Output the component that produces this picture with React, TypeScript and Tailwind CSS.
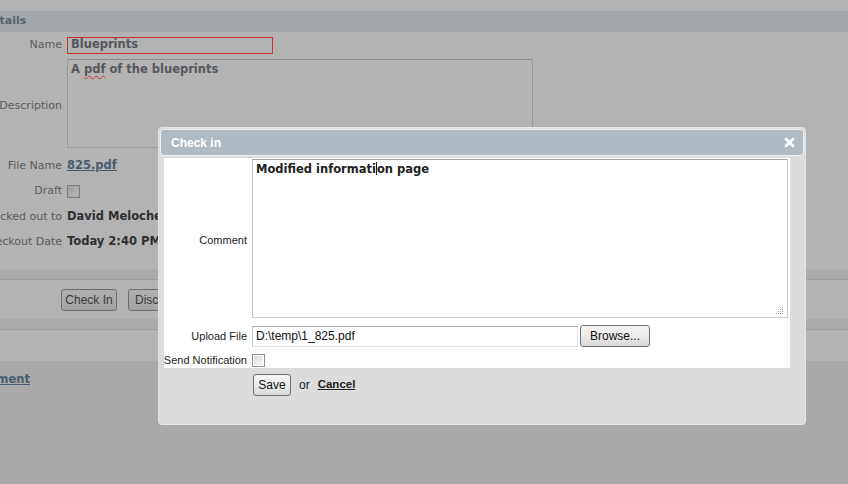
import React from 'react'

function BgLabel({ children }: { children: React.ReactNode }) {
  return (
    <div className="w-[62px] shrink-0 flex justify-end whitespace-nowrap text-[11px] text-[#5c5c5c]">
      {children}
    </div>
  )
}

function BgCheckbox() {
  return (
    <div className="w-[13px] h-[13px] border border-[#7d7d7d] bg-[#a9a9a9] p-[1px]">
      <div className="w-full h-full bg-gradient-to-br from-[#9e9e9e] to-[#b8b8b8]" />
    </div>
  )
}

function Checkbox() {
  return (
    <div className="w-[13px] h-[13px] border border-[#8e8f8f] bg-white p-[1px]">
      <div className="w-full h-full bg-gradient-to-br from-[#dcdcdc] to-[#f6f6f6]" />
    </div>
  )
}

function Background() {
  return (
    <div className="flex flex-col">
      <div className="h-[11px] bg-[#b3b3b3]" />
      <div className="h-[21px] bg-[#a4a8ab] flex items-center">
        <span className="-ml-[17px] text-[11px] font-bold text-[#56616b] whitespace-nowrap">Details</span>
      </div>

      <div className="h-[237px] bg-[#b3b3b3] flex flex-col">
        <div className="mt-[3px] h-[20px] flex items-center gap-[5px]">
          <BgLabel>Name</BgLabel>
          <div className="w-[206px] h-[17px] border border-[#c23535] flex items-center px-[3px] text-[11.5px] font-bold text-[#55555a]">
            Blueprints
          </div>
        </div>
        <div className="mt-[4px] h-[89px] flex items-center gap-[5px]">
          <div className="pt-[5px]">
            <BgLabel>Description</BgLabel>
          </div>
          <div className="w-[466px] h-[89px] border border-[#9a9a9a] border-t-[#8c8c8c] px-[3px] py-[1px] text-[11.5px] font-bold text-[#57575d]">
            A{' '}
            <span className="underline decoration-wavy decoration-[#c23535] decoration-1 underline-offset-2">pdf</span>{' '}
            of the blueprints
          </div>
        </div>
        <div className="mt-[8px] h-[20px] flex items-center gap-[5px]">
          <BgLabel>File Name</BgLabel>
          <span className="text-[11.5px] font-bold underline text-[#4a5c6e]">825.pdf</span>
        </div>
        <div className="mt-[5px] h-[20px] flex items-center gap-[5px]">
          <BgLabel>Draft</BgLabel>
          <BgCheckbox />
        </div>
        <div className="mt-[6px] h-[20px] flex items-center gap-[5px]">
          <BgLabel>Checked out to</BgLabel>
          <span className="text-[11.5px] font-bold text-[#2f2f33] whitespace-nowrap">David Meloche</span>
        </div>
        <div className="mt-[5px] h-[20px] flex items-center gap-[5px]">
          <BgLabel>Checkout Date</BgLabel>
          <span className="text-[11.5px] font-bold text-[#2f2f33] whitespace-nowrap">Today 2:40 PM</span>
        </div>
      </div>

      <div className="h-[11px] bg-[#ababab] border-b border-[#9c9c9c]" />
      <div className="h-[39px] bg-[#b3b3b3] pt-[9px] flex gap-[11px] pl-[61px] font-['Liberation_Sans',sans-serif]">
        <div className="w-[56px] h-[22px] rounded-[3px] border border-[#6f6f6f] bg-gradient-to-b from-[#b0b0b0] to-[#a3a3a3] flex items-center justify-center text-[12px] text-[#3a3a3a]">
          Check In
        </div>
        <div className="h-[22px] px-[6px] rounded-[3px] border border-[#6f6f6f] bg-gradient-to-b from-[#b0b0b0] to-[#a3a3a3] flex items-center text-[12px] text-[#3a3a3a]">
          Discard Check Out
        </div>
      </div>
      <div className="h-[11px] bg-[#ababab] border-b border-[#9c9c9c]" />
      <div className="h-[31px] bg-[#b3b3b3]" />
      <div className="h-[123px] bg-[#a9a9a9] pt-[10px]">
        <div className="w-[30px] flex justify-end whitespace-nowrap">
          <span className="text-[11.5px] font-bold underline text-[#4a5c6e]">Add Attachment</span>
        </div>
      </div>
    </div>
  )
}

function Dialog() {
  return (
    <div className="absolute left-[158px] top-[127px] w-[648px] h-[298px] rounded-[4px] bg-[#dcdcdc] border border-[#e4e4e4] p-[1px] font-['Liberation_Sans',sans-serif]">
      <div className="h-[27px] rounded-[4px] bg-[#b0bac3] border border-[#eef1f3] flex items-center justify-between pl-[10px] pr-[8px]">
        <span className="text-[12px] font-bold text-white">Check in</span>
        <svg width="11" height="11" viewBox="0 0 11 11">
          <path d="M2 2 L9 9 M9 2 L2 9" stroke="#ffffff" strokeWidth="2.6" strokeLinecap="round" />
        </svg>
      </div>

      <div className="mt-[2px] ml-[4px] w-[626px] h-[210px] bg-white pt-[1px] flex flex-col">
        <div className="flex gap-[5px]">
          <div className="w-[83px] pt-[3px] flex items-center justify-end text-[11px] text-[#222]">Comment</div>
          <div className="relative w-[536px] h-[159px] border border-[#c9ced3] border-t-[#a6a6a6] border-l-[#b9b9b9] px-[3px] pt-[1px] font-['DejaVu_Sans',sans-serif] text-[11.5px] font-bold text-[#222]">
            Modified informati
            <span className="inline-block w-[1px] h-[13px] bg-[#222] align-middle -mt-[2px]" />
            on page
            <svg className="absolute right-[3px] bottom-[2px]" width="10" height="9" viewBox="0 0 10 9">
              <rect x="8" y="1" width="1" height="1" fill="#9a9a9a" />
              <rect x="6" y="3" width="1" height="1" fill="#9a9a9a" />
              <rect x="8" y="3" width="1" height="1" fill="#9a9a9a" />
              <rect x="4" y="5" width="1" height="1" fill="#9a9a9a" />
              <rect x="6" y="5" width="1" height="1" fill="#9a9a9a" />
              <rect x="8" y="5" width="1" height="1" fill="#9a9a9a" />
              <rect x="2" y="7" width="1" height="1" fill="#9a9a9a" />
              <rect x="4" y="7" width="1" height="1" fill="#9a9a9a" />
              <rect x="6" y="7" width="1" height="1" fill="#9a9a9a" />
              <rect x="8" y="7" width="1" height="1" fill="#9a9a9a" />
            </svg>
          </div>
        </div>

        <div className="mt-[7px] h-[22px] flex items-center gap-[5px]">
          <div className="w-[83px] flex justify-end text-[11px] text-[#222]">Upload File</div>
          <div className="w-[326px] h-[21px] border border-[#dfe3e8] border-t-[#a9a9a9] border-l-[#c4c4c4] flex items-center px-[3px] text-[12px] text-[#111]">
            D:\temp\1_825.pdf
          </div>
          <div className="-ml-[3px] w-[70px] h-[22px] rounded-[3px] border border-[#707070] bg-gradient-to-b from-[#f3f3f3] via-[#ebebeb] to-[#d8d8d8] flex items-center justify-center text-[12px] text-[#111]">
            Browse...
          </div>
        </div>

        <div className="mt-[6px] h-[15px] flex items-center gap-[5px]">
          <div className="w-[83px] flex justify-end whitespace-nowrap text-[11px] text-[#222]">Send Notification</div>
          <Checkbox />
        </div>
      </div>

      <div className="mt-[6px] ml-[93px] flex items-center">
        <div className="w-[38px] h-[22px] rounded-[3px] border border-[#707070] bg-gradient-to-b from-[#f6f6f6] via-[#ececec] to-[#d9d9d9] flex items-center justify-center text-[12px] text-[#111]">
          Save
        </div>
        <span className="ml-[8px] text-[12px] text-[#222]">or</span>
        <span className="ml-[8px] text-[11.5px] font-bold underline text-[#222]">Cancel</span>
      </div>
    </div>
  )
}

export default function App() {
  return (
    <div className="relative w-[848px] h-[484px] overflow-hidden bg-[#a9a9a9] font-['DejaVu_Sans',sans-serif]">
      <Background />
      <Dialog />
    </div>
  )
}
